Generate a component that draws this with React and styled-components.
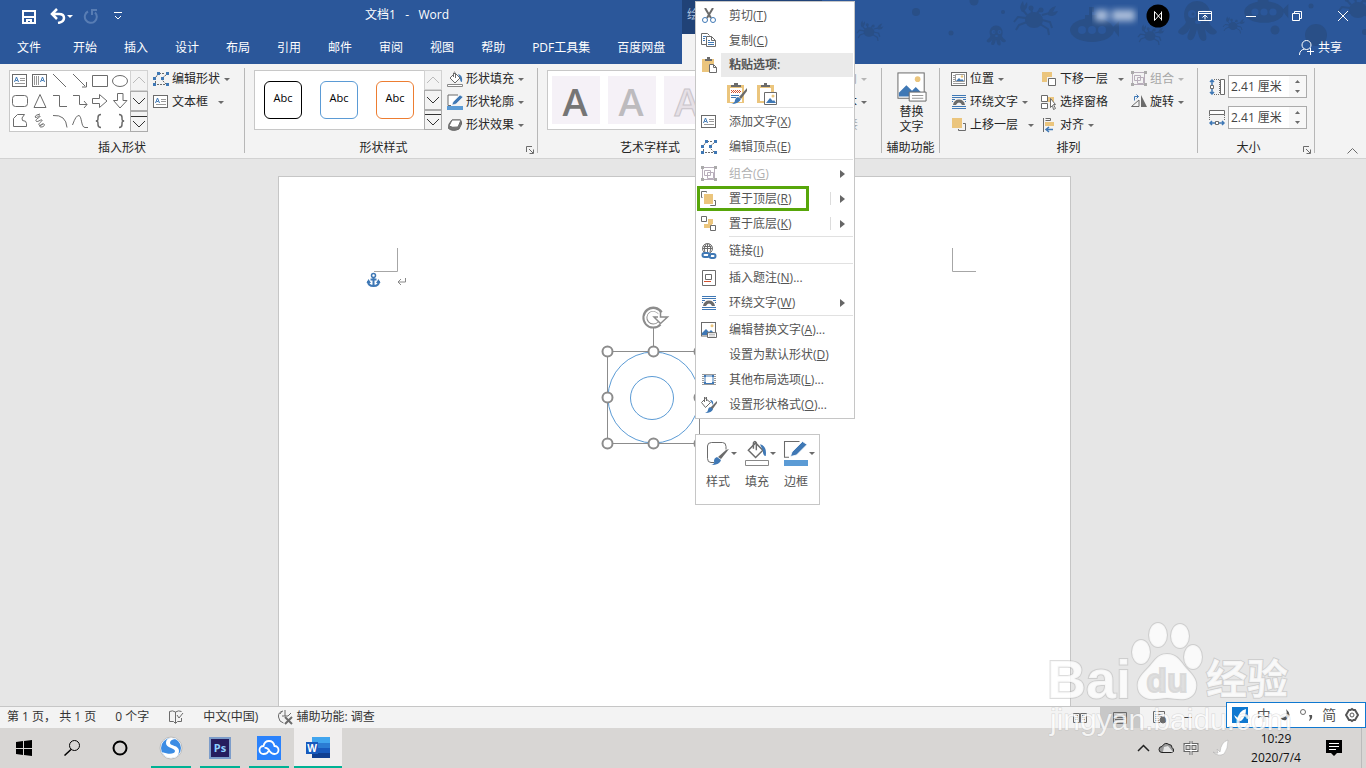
import React, { useState } from "react";
import styled, { createGlobalStyle } from "styled-components";

const GlobalStyle = createGlobalStyle`
    * { box-sizing: border-box; }

    body {
        margin: 0;
        overflow: hidden;
        font-family: "Open Sans", "Noto Sans CJK SC", sans-serif;
        font-size: 12px;
        line-height: 18px;
        color: #262626;
    }

    button, input {
        font: inherit;
        color: inherit;
        border: 0;
        padding: 0;
        background: none;
    }

    svg { display: block; flex: none; }
`;

const blue = "#2b579a";
const grey = "#6b6b6b";
const iconBlue = "#3f78b5";
const gold = "#ebc57d";

const Screen = styled.div`
    position: relative;
    display: flex;
    flex-direction: column;
    height: 100vh;
    overflow: hidden;
`;

/* ---------- header ---------- */

const Header = styled.header`
    position: relative;
    background: ${blue};
    color: #fff;
`;

const Art = styled.svg`
    position: absolute;
    top: 0;
    right: 0;
`;

const TitleRow = styled.div`
    position: relative;
    display: flex;
    height: 34px;
`;

const QuickAccess = styled.div`
    display: flex;
    align-items: center;
    gap: 10px;
    width: 132px;
    padding: 0 0 2px 21px;
`;

const UndoGroup = styled.div`
    display: flex;
    align-items: center;
    margin-left: 3px;
`;

const Title = styled.div`
    width: 550px;
    padding-top: 6px;
    text-align: center;
    white-space: pre;
`;

const ToolTabTitle = styled.div`
    width: 140px;
    padding: 6px 0 0 5px;
    background: #204277;
    color: #a9bfdd;
`;

const WindowButtons = styled.div`
    display: flex;
    align-items: center;
    height: 31px;
    margin-left: auto;
`;

const Account = styled.div`
    display: flex;
    align-items: center;
    gap: 8px;
    margin-right: 12px;
`;

const WindowButton = styled.button`
    display: flex;
    align-items: center;
    justify-content: center;
    width: 46px;
    height: 30px;
`;

const TabRow = styled.nav`
    position: relative;
    display: flex;
    gap: 1px;
    height: 30px;
`;

const Tab = styled.button`
    padding: 0 13px 3px;
    white-space: nowrap;
    ${(props) => props.$file && "width: 59px; padding-left: 17px; text-align: left;"}
    ${(props) => props.$active && "width: 56px; margin-left: 3px; background: #f3f3f3; color: #2b579a;"}
`;

const TellMe = styled.button`
    margin-left: 43px;
    white-space: nowrap;
`;

const Share = styled.button`
    display: flex;
    align-items: center;
    gap: 4px;
    margin: 0 24px 3px auto;
`;

/* ---------- ribbon ---------- */

const Ribbon = styled.div`
    display: flex;
    height: 95px;
    background: #f3f3f3;
    border-bottom: 1px solid #d2d2d2;
`;

const Group = styled.section`
    display: flex;
    flex-direction: column;
    justify-content: space-between;
    flex: none;
    width: ${(props) => props.$width}px;
    padding-top: 3px;
`;

const GroupBody = styled.div`
    display: flex;
    align-items: flex-start;
    gap: ${(props) => props.$gap || 0}px;
    padding-left: ${(props) => props.$left || 0}px;
`;

const GroupFooter = styled.div`
    display: grid;
    grid-template-columns: ${(props) => (props.$launcher ? "1fr 12px" : "1fr")};
    align-items: center;
    height: 20px;
    padding-right: ${(props) => (props.$launcher ? 3 : 0)}px;
    text-align: center;
    white-space: nowrap;
`;

const LauncherButton = styled.button`
    display: flex;
    justify-content: flex-end;
    padding-top: 3px;
`;

const Divider = styled.div`
    width: 1px;
    margin: 4px 0 5px;
    background: #b7b7b7;
`;

const Gallery = styled.div`
    display: flex;
    height: ${(props) => props.$height}px;
    margin-top: 3px;
    background: #fff;
    border: 1px solid #c8c8c8;
`;

const ShapeGrid = styled.div`
    display: grid;
    grid-template-columns: repeat(6, 20px);
    grid-auto-rows: 20px;
`;

const ShapeButton = styled.button`
    display: flex;
    align-items: center;
    justify-content: center;
`;

const Scroller = styled.div`
    display: grid;
    grid-template-rows: repeat(3, 1fr);
    width: 17px;
    margin: -1px;
    margin-left: 0;
`;

const ScrollButton = styled.button`
    display: flex;
    align-items: center;
    justify-content: center;
    background: #f3f3f3;
    border: 1px solid ${(props) => (props.disabled ? "#d2d2d2" : "#ababab")};
`;

const StyleTiles = styled.div`
    display: flex;
    gap: 18px;
    padding: 10px 10px 0 9px;
`;

const StyleTile = styled.button`
    width: 38px;
    height: 38px;
    padding-bottom: 4px;
    border: 1px solid ${(props) => props.$color};
    border-radius: 6px;
    color: #000;
    font-size: 11px;
`;

const ArtTiles = styled.div`
    display: flex;
    gap: 8px;
    padding: 5px 4px;
`;

const ArtTile = styled.button`
    width: 48px;
    height: 48px;
    background: #f5f1f7;
`;

const Column = styled.div`
    display: flex;
    flex-direction: column;
    align-items: ${(props) => (props.$end ? "flex-end" : "flex-start")};
    gap: 1px;
    padding-top: 1px;
    ${(props) => props.$width && `width: ${props.$width}px;`}
    ${(props) => props.$end && "flex: 1; padding-right: 14px;"}
`;

const ToolButton = styled.button`
    display: flex;
    align-items: center;
    gap: 3px;
    height: 22px;
    white-space: nowrap;
    color: ${(props) => (props.disabled ? "#a6a6a6" : "#262626")};
`;

const Caret = styled.span`
    flex: none;
    margin-left: ${(props) => (props.$wide ? 7 : 1)}px;
    border: 3px solid transparent;
    border-top-color: ${(props) => (props.$light ? "#b5b5b5" : props.$white ? "#fff" : "#6b6b6b")};
    border-bottom: 0;
`;

const BigButton = styled.button`
    display: flex;
    flex-direction: column;
    align-items: center;
    gap: 2px;
    width: 100%;
    padding: 5px 0 0 2px;
    line-height: 15px;
`;

const SizeRow = styled.label`
    display: flex;
    align-items: center;
    gap: 3px;
    height: 23px;
`;

const SizeRows = styled.div`
    display: flex;
    flex-direction: column;
    gap: 8px;
    padding-top: 8px;
`;

const SpinBox = styled.span`
    display: flex;
    width: 79px;
    height: 23px;
    background: #fff;
    border: 1px solid #ababab;
`;

const SpinInput = styled.input`
    width: 60px;
    padding-left: 2px;
    color: #444;
    outline: 0;
`;

const SpinButtons = styled.span`
    display: grid;
    grid-template-rows: 1fr 1fr;
    flex: 1;
    background: #f7f7f7;
`;

const SpinButton = styled.button`
    display: flex;
    align-items: center;
    justify-content: center;
`;

const Collapse = styled.div`
    display: flex;
    flex: 1;
    align-items: flex-end;
    justify-content: flex-end;
    padding: 0 8px 4px 0;
`;

/* ---------- document ---------- */

const Canvas = styled.main`
    display: flex;
    flex: 1;
    justify-content: center;
    min-height: 0;
    padding: 17px 17px 0 0;
    background: #e6e6e6;
`;

const Paper = styled.article`
    position: relative;
    width: 793px;
    background: #fff;
    border: 1px solid #c6c6c6;
    border-bottom: 0;
`;

const CanvasItem = styled.svg`
    position: absolute;
    left: ${(props) => props.$x}px;
    top: ${(props) => props.$y}px;
`;

/* ---------- context menu ---------- */

const Menu = styled.div`
    position: absolute;
    left: 695px;
    top: 1px;
    width: 160px;
    padding: 1px;
    background: #fff;
    border: 1px solid #c6c6c6;
    color: #555;
`;

const MenuItem = styled.button`
    display: flex;
    align-items: center;
    position: relative;
    width: 100%;
    height: 25px;
    padding-left: 4px;
    text-align: left;
    white-space: nowrap;
    color: ${(props) => (props.disabled ? "#b1b1b1" : "#555")};
`;

const MenuIcon = styled.span`
    width: 28px;
`;

const MenuLabel = styled.span`
    flex: 1;
`;

const SubArrow = styled.span`
    display: flex;
    align-items: center;
    height: 13px;
    width: 23px;
    padding-left: 9px;
    border-left: 1px solid ${(props) => (props.$split ? "#dcdcdc" : "transparent")};
`;

const MenuLine = styled.div`
    height: 1px;
    margin: 0 0 1px 32px;
    background: #e1e1e1;
`;

const PasteHeader = styled.div`
    display: flex;
    align-items: center;
    height: 24px;
    padding-left: 4px;
    background: linear-gradient(to right, #fff 24px, #eaeaea 24px);
    font-weight: 600;
`;

const PasteOptions = styled.div`
    display: flex;
    gap: 7px;
    height: 30px;
    padding: 2px 0 0 28px;
`;

const Highlight = styled.span`
    position: absolute;
    left: 0;
    top: 0;
    width: 112px;
    height: 25px;
    border: 3px solid #57a60a;
`;

const MiniBar = styled.div`
    position: absolute;
    left: 695px;
    top: 434px;
    display: flex;
    gap: 3px;
    width: 125px;
    height: 71px;
    padding: 5px 0 0 4px;
    background: #fff;
    border: 1px solid #c6c6c6;
    color: #555;
`;

const MiniButton = styled.button`
    display: flex;
    flex-direction: column;
    align-items: center;
    gap: 7px;
    width: 36px;
    height: 52px;
`;

const MiniTop = styled.span`
    display: flex;
    align-items: center;
    margin-left: 5px;
`;

/* ---------- status bar and taskbar ---------- */

const StatusBar = styled.footer`
    display: flex;
    align-items: center;
    gap: 19px;
    height: 22px;
    padding: 0 0 2px 7px;
    background: #f3f3f3;
    border-top: 1px solid #c6c6c6;
    white-space: nowrap;
    color: #333;
`;

const StatusButton = styled.button`
    display: flex;
    align-items: center;
    gap: 3px;
`;

const Views = styled.div`
    display: flex;
    align-items: center;
    height: 21px;
    margin: 0 174px -2px auto;
`;

const ViewButton = styled.button`
    display: flex;
    align-items: center;
    justify-content: center;
    width: 40px;
    height: 21px;
    background: ${(props) => (props.$active ? "#c8c8c8" : "transparent")};
`;

const ImeBar = styled.div`
    position: absolute;
    right: 0;
    bottom: 40px;
    display: flex;
    align-items: center;
    justify-content: space-between;
    width: 140px;
    height: 26px;
    padding: 0 6px 0 5px;
    background: #fff;
    border: 1px solid #0f78d0;
    color: #555;
    font-size: 14px;
`;

const Taskbar = styled.div`
    display: flex;
    height: 40px;
    background: #d8d6d4;
`;

const TaskButton = styled.button`
    display: flex;
    align-items: center;
    justify-content: center;
    width: 48px;
    height: 40px;
`;

const Apps = styled.div`
    display: flex;
    gap: 1px;
    padding-left: 3px;
`;

const AppButton = styled(TaskButton)`
    background: linear-gradient(#00b294, #00b294) center bottom / ${(props) => (props.$active ? 48 : 40)}px 2px no-repeat
        ${(props) => (props.$active ? "#f0eeee" : "transparent")};
`;

const Tray = styled.div`
    display: flex;
    align-items: center;
    gap: 8px;
    margin-left: auto;
    padding-right: 4px;
`;

const Clock = styled.time`
    width: 76px;
    text-align: center;
    line-height: 19px;
    color: #111;
`;

const NoticeButton = styled.button`
    display: flex;
    align-items: center;
    justify-content: center;
    width: 40px;
    height: 40px;
    padding-right: 15px;
    border-right: 1px solid #bbb;
`;

const Watermark = styled.svg`
    position: absolute;
    right: 66px;
    bottom: 24px;
    pointer-events: none;
`;

/* ---------- drawings ---------- */

const Svg = ({ w = 16, h = 16, children }) => (
    <svg width={w} height={h} viewBox={`0 0 ${w} ${h}`} fill="none" stroke={grey} aria-hidden="true">
        {children}
    </svg>
);

const TextBoxIcon = () => (
    <Svg>
        <rect x=".5" y="1.500" width="14" height="12" fill="#fff" />
        <path d="M8 5.500h5M8 7.500h5M3 10.500h10" stroke="#999" />
        <path d="M2.500 9 4.500 4 6.500 9M3.500 7.500h2" stroke={iconBlue} />
    </Svg>
);

const VertTextIcon = () => (
    <Svg>
        <rect x=".5" y="1.500" width="14" height="12" fill="#fff" />
        <path d="M2.500 3v9M4.500 3v9M6.500 3v9" stroke="#999" />
        <path d="M8.500 9 10.500 4 12.500 9M9.500 7.500h2" stroke={iconBlue} />
    </Svg>
);

const EditPointsIcon = () => (
    <Svg>
        <path d="M6 2.500h5M13 4 8 8l5 5M4 13.500h8M2.500 7v5M3 6l2-3" strokeDasharray="2 1" />
        <path d="M4 1h3v3H4zM13 1h3v3h-3zM0 6h3v3H0zM8 6h3v3H8zM0 12h3v3H0zM13 12h3v3h-3z" fill={iconBlue} stroke="none" />
    </Svg>
);

const BucketIcon = ({ line }) => (
    <Svg w={line ? 26 : 16} h={line ? 26 : 16}>
        <g transform={line ? "scale(1.45)" : undefined}>
            <path d="m3 7 5-5 5 5-5 5z" fill="#fff" />
            <path d="M6.500 6V2Q7.500 .2 8.500 2v5" />
            <path d="M11 3q5 1 4 8-2 0-2-4z" fill={iconBlue} stroke="none" />
        </g>
        {line ? <path d="M1.500 20.500h23v5h-23z" fill="#fff" stroke="#888" /> : <path d="M.5 13.500h15v2H.5z" fill="#fff" stroke="#888" />}
    </Svg>
);

const OutlineIcon = ({ line }) => (
    <Svg w={line ? 26 : 16} h={line ? 26 : 16}>
        <g transform={line ? "scale(1.5)" : undefined}>
            <path d="M11 1H1v10.500h3" fill="#fff" strokeWidth={line ? 0.7 : 1} />
            <path d="m5 11 1-3 7-7 3 2-7 7z" fill={iconBlue} stroke="#fff" strokeWidth=".5" />
        </g>
        <path d={line ? "M1 20h24v6H1z" : "M0 12h16v4H0z"} fill="#5b9bd5" stroke="none" />
    </Svg>
);

const EffectIcon = () => (
    <Svg>
        <path d="M1.500 11.500 2 7l3-4h8q2 1 1.500 4L12 12q-6 3-10.500-.5z" fill="#777" stroke="#666" />
        <path d="m2 9 3-6h9l-3 7q-6 1-9-1z" fill="#fff" />
    </Svg>
);

const StyleBrushIcon = () => (
    <Svg w={26} h={26}>
        <path d="M9 22.500H6q-3.500 0-3.500-4V6q0-3.500 4-3.500h11q3.500 0 3.500 4v3" />
        <path d="m24 9-8 10-3-2 8-7z" fill={grey} stroke="none" />
        <path d="m12 17 4 3q-1 5-10 5 4-1 3-4 0-3 3-4z" fill={iconBlue} stroke="none" />
    </Svg>
);

const PictureIcon = ({ size = 16 }) => (
    <svg width={size} height={size} viewBox="0 0 16 16" fill="none" aria-hidden="true">
        <rect x=".5" y=".5" width="14" height="13.500" fill="#fff" stroke={grey} strokeWidth={16 / size} />
        <circle cx="11" cy="3.800" r="1.500" fill={gold} />
        <path d="M1 13v-2l4-4 3 3 2-2 4 4v1z" fill={iconBlue} />
        <path d="M6.500 10.700H15.500V15.500H6.500z" fill="#fff" stroke={grey} strokeWidth={16 / size} />
        <path d="M8 12.500h6M8 14h6" stroke="#999" strokeWidth=".6" />
    </svg>
);

const LayoutIcon = () => (
    <Svg>
        <rect x=".5" y="1.500" width="15" height="13" fill="#fff" />
        <path d="M2 4.500h2M2 6.500h2M2 8.500h2M2 10.500h2M2 12.500h12" stroke="#999" />
        <path d="M4.500 3.500h9v7h-9z" stroke="#999" />
        <path d="m5 10 3-3 2 2 1-1 2 2z" fill={iconBlue} stroke="none" />
        <circle cx="11" cy="5.500" r="1.200" fill={gold} stroke="none" />
    </Svg>
);

const WrapIcon = () => (
    <Svg>
        <path d="M1 1.500h14M1 3.500h14M1 5.500h3M12 5.500h3M1 7.500h1M14 7.500h1M1 12.500h14M1 14.500h14" stroke={iconBlue} />
        <path d="M2 11q1-5.500 6-5.500t6 5.500h-3q-1-2.500-3-2.500T5 11z" fill={grey} stroke="none" />
    </Svg>
);

const ForwardIcon = () => (
    <Svg>
        <path d="M1 1h10v10H1z" fill={gold} stroke="none" />
        <path d="M12 6.500h2.500v7h-7V12" stroke={grey} />
    </Svg>
);

const BackwardIcon = () => (
    <Svg>
        <path d="M1 1h10v5H6v5H1z" fill={gold} stroke="none" />
        <path d="M7.500 7.500h7v7h-7z" fill="#fff" />
    </Svg>
);

const BringFrontIcon = () => (
    <Svg>
        <path d="M3 3h9v10H3z" fill={gold} stroke="none" />
        <path d="M1.500 6.500h-1v-6h5v1M13 9.500h1.500v5h-5V14" />
    </Svg>
);

const SendBackIcon = () => (
    <Svg>
        <path d="M7 3h5v5h-1v4H3V8h4z" fill={gold} stroke="none" />
        <path d="M.5.5h5v5h-5zM9.500 9.500h5v5h-5z" fill="#fff" />
    </Svg>
);

const SelectPaneIcon = () => (
    <Svg>
        <path d="M.5 1.500h6v6h-6zM.5 9.500h6v5h-6z" fill="#fff" />
        <path d="M7 3h6v5H7z" fill={gold} stroke="none" />
        <path d="m9.500 4.500 5 6h-2l2 4-2 1-1-4-2 2z" fill="#fff" />
    </Svg>
);

const AlignIcon = () => (
    <Svg>
        <path d="M2.500 1v14M4.500 1.500h5v2h-5" />
        <path d="M4 5h9v4H4z" fill={gold} stroke="none" />
        <path d="M12 12.500H5M8 10l-3 2.500L8 15" stroke={iconBlue} strokeWidth="1.500" />
    </Svg>
);

const GroupIcon = () => (
    <Svg>
        <path d="M1.500 1.500h12v12h-12zM3.500 4.500h6v5h-6zM6.500 6.500h6v6h-6z" stroke="#b8aebb" />
        <path d="M0 0h3v3H0zM13 0h3v3h-3zM0 12h3v3H0zM13 12h3v3h-3z" fill="#aaa" stroke="none" />
    </Svg>
);

const RotateIcon = () => (
    <Svg>
        <path d="M.5 12.500H8V6z" />
        <path d="M10 1v12h6z" fill={grey} stroke="none" />
        <path d="M3.500 6.500v-4h4M5.500.5l2 2-2 2" stroke={iconBlue} />
    </Svg>
);

const HeightIcon = () => (
    <Svg>
        <path d="M5 .5h5M5 15.500h5M10.500 1v14" strokeDasharray="1 1" />
        <path d="M11.500.5h4v15h-4zM1.500 6.500h3v3h-3z" fill="#fff" />
        <path d="M3 6V1M1 3l2-2 2 2M3 10v5M1 13l2 2 2-2" stroke={iconBlue} strokeWidth="1.500" />
    </Svg>
);

const WidthIcon = () => (
    <Svg>
        <path d="M.5.5h15v4H.5z" fill="#fff" />
        <path d="M.5 5v6M15.500 5v6" strokeDasharray="1 1" />
        <path d="M6.500 11.500h3v3h-3z" fill="#fff" />
        <path d="M6 13H1M3 11l-2 2 2 2M10 13h5M13 11l2 2-2 2" stroke={iconBlue} strokeWidth="1.500" />
    </Svg>
);

const CutIcon = () => (
    <Svg>
        <path d="m4 0 6 10M12 0 6 10" strokeWidth="2" />
        <circle cx="4" cy="12" r="2.500" stroke={iconBlue} />
        <circle cx="12" cy="12" r="2.500" stroke={iconBlue} />
    </Svg>
);

const CopyIcon = () => (
    <Svg>
        <path d="M5 11.500H.5V.5h6l2 2" />
        <path d="M5.500 3.500h5l4 4v6h-9zM10.500 3.500v4h4" fill="#fff" />
        <path d="M2 3.500h3M2 5.500h2M2 7.500h2M7 7.500h2M7 9.500h6M7 11.500h6" stroke={iconBlue} />
    </Svg>
);

const PasteIcon = () => (
    <Svg>
        <path d="M1 2h12v5H8v8H1z" fill={gold} stroke="none" />
        <path d="M4 4V2h2V0h3v2h2v2z" fill={grey} stroke="none" />
        <path d="M8.500 7.500h4l3 3v5h-7zM12.500 7.500v3h3" fill="#fff" />
    </Svg>
);

const PasteFormatIcon = () => (
    <Svg w={23} h={23}>
        <path d="M2 3h17v18H2z" fill={gold} stroke="none" />
        <path d="M5 6h12v14H5z" fill="#fff" stroke="none" />
        <path d="M6 5V3h3V1h4v2h3v2z" fill={grey} stroke="none" />
        <path d="M6 8.500h10M7 9.500h9M6 10.500h10" stroke="#d4512e" strokeDasharray="1 1" />
        <path d="M6 13.500h8M6 15.500h5" stroke={iconBlue} />
        <path d="m22 6-8 9 2 2 6-8z" fill={grey} stroke="none" />
        <path d="m13 15 3 2q-2 5-10 5 4-1 4-4 1-3 3-3z" fill={iconBlue} stroke="none" />
    </Svg>
);

const PastePictureIcon = () => (
    <Svg w={23} h={23}>
        <path d="M2 3h17v7H9v11H2z" fill={gold} stroke="none" />
        <path d="M5 6h11v4H9v9H5z" fill="#fff" stroke="none" />
        <path d="M6 5V3h3V1h3v2h3v2z" fill={grey} stroke="none" />
        <path d="M9.500 10.500h12v12h-12z" fill="#fff" />
        <path d="m11 21 4-5 3 3 1-1 2 3z" fill={iconBlue} stroke="none" />
        <circle cx="18" cy="14" r="1.500" fill={gold} stroke="none" />
    </Svg>
);

const LinkIcon = () => (
    <Svg>
        <circle cx="6.500" cy="5.500" r="5" />
        <path d="M1.500 5.500h10M6.500.5v9M2.500 3.500h8M4 10Q2 5 5 1M9 9q2-4-1-8" />
        <path d="M3.500 10h3a2 2 0 0 1 0 4h-3a2 2 0 0 1 0-4zM10.500 11h2a2 2 0 0 1 0 4h-2a2 2 0 0 1 0-4z" stroke={iconBlue} strokeWidth="2" fill="#fff" />
        <path d="M7 12.500h3" stroke={iconBlue} strokeWidth="2" />
    </Svg>
);

const CaptionIcon = () => (
    <Svg>
        <path d="M1.500.5h13v15h-13z" />
        <path d="M4.500 4.500h6v5h-6z" />
        <path d="M3 11.500h7" stroke="#d4512e" />
    </Svg>
);

const MoreLayoutIcon = () => (
    <Svg>
        <path d="M1 2.500h14M1 4.500h2M13 4.500h2M1 6.500h2M13 6.500h2M1 8.500h2M13 8.500h2M1 10.500h2M13 10.500h2M1 12.500h14" stroke="#999" />
        <path d="M4 4h8v7.500H4z" fill="#fff" stroke={iconBlue} />
        <path d="M3 3h2v2H3zM11 3h2v2h-2zM3 10h2v2H3zM11 10h2v2h-2z" fill={iconBlue} stroke="none" />
    </Svg>
);

const FormatIcon = () => (
    <Svg>
        <path d="m.5 5.500 4-4 5 4-5 5zM3.500 5V0h2v4" />
        <path d="m16 4-7 7 2 2 5-7z" fill={grey} stroke="none" />
        <path d="m9 10 3 2q-1 4-8 4 3-1 3-3t2-3z" fill={iconBlue} stroke="none" />
        <path d="M9 3q4 0 3 5z" fill={iconBlue} stroke="none" />
    </Svg>
);

const LauncherIcon = () => (
    <Svg w={8} h={8}>
        <path d="M.5 6V.5H6M3 3l4 4M7.500 3.500v4h-4" />
    </Svg>
);

const shapes = [
    <TextBoxIcon />,
    <VertTextIcon />,
    <Svg><path d="m1 1 13 13" /></Svg>,
    <Svg><path d="m1 1 12 12M14.500 9v5H10" /></Svg>,
    <Svg><path d="M.5 2.500h15v11H.5z" /></Svg>,
    <Svg><ellipse cx="8" cy="8" rx="7.500" ry="5.500" /></Svg>,
    <Svg><rect x=".5" y="2.500" width="15" height="11" rx="3" /></Svg>,
    <Svg><path d="M8 1.500 14 14.500H2z" /></Svg>,
    <Svg><path d="M1 2.500h6.500v11H15" /></Svg>,
    <Svg><path d="M1 2.500h6.500v9H15M12 8l3 3.500-3 3.500" /></Svg>,
    <Svg><path d="M.5 5.500h7v-4L15 8l-7.500 6.500v-4h-7z" /></Svg>,
    <Svg><path d="M5.500.5v7h-4L8 15l7-7.500h-4v-7z" /></Svg>,
    <Svg><path d="M1.500 13.500v-8l4-4h7q-4 4-2 6 4 0 4 3v3z" /></Svg>,
    <Svg><path d="M8 1Q3 2 3 4c1 2 4-2 5-1S3 6 4 8s5-2 6-1-4 3-3 5 4-2 5-1 0 3-3 3 0-3 2-3" /></Svg>,
    <Svg><path d="M1 2.500q13-1 14 12" /></Svg>,
    <Svg><path d="M.5 12Q4 2 7 2.500c3 1 2 12 6 12h3" /></Svg>,
    <Svg><path d="M9 1.500q-3 0-3 3c0 3 0 3-2 3.500 2 .5 2 .5 2 3.500q0 3 3 3" strokeWidth="1.500" /></Svg>,
    <Svg><path d="M7 1.500q3 0 3 3c0 3 0 3 2 3.500-2 .5-2 .5-2 3.500q0 3-3 3" strokeWidth="1.500" /></Svg>,
];

const HeaderArt = () => (
    <Art width="516" height="64" viewBox="850 0 516 64" fill="#294f87" aria-hidden="true">
        <defs>
            <g id="crab">
                <ellipse cx="0" cy="0" rx="9" ry="8" />
                <path d="M-8-2-16-3-20 2M-7 2-15 5-18 10M8 0l8 2 2 6M6 4l8 5 1 6M-7-5l-5-6M8-5l8-2M-2-7l-1-6M3-7l4-4" fill="none" stroke="#294f87" strokeWidth="2" />
                <path d="M-12-8q-4-5 1-11l1 5 3-4q2 7-5 10zM14-5q0-7 8-9l-3 6 5-1q-3 7-10 4z" />
                <circle cx="-3" cy="-12" r="2.500" />
                <circle cx="7" cy="-10" r="2.500" />
            </g>
            <g id="octo">
                <path d="M0-15c11 0 16 11 12 21 2 6 7 7 8 10-3 5-9 2-12-3 1 7 3 11-1 12-5 0-5-6-7-12-2 7-3 12-8 11-4-3 1-8 1-12-3 7-9 9-12 4 2-5 6-5 8-10C-16-4-10-15 0-15z" />
                <g fill="#2b579a">
                    <circle cx="-5" cy="-2" r="4" />
                    <circle cx="7" cy="-2" r="4" />
                    <ellipse cx="1" cy="6" rx="3" ry="2" />
                </g>
                <circle cx="-4" cy="-2" r="1.500" />
                <circle cx="7" cy="-2" r="1.500" />
            </g>
            <g id="sub">
                <ellipse cx="0" cy="0" rx="22" ry="12" />
                <path d="M-7-10v-5h12v5M-3-15v-8h5v5h-2v4M20-2l7-7v16z" />
                <g fill="#2b579a">
                    <circle cx="-10" cy="0" r="4" />
                    <circle cx="0" cy="0" r="4" />
                    <circle cx="10" cy="0" r="4" />
                </g>
            </g>
        </defs>
        <use href="#crab" transform="translate(869 32) scale(.6)" />
        <use href="#crab" transform="translate(1034 20)" />
        <use href="#octo" transform="translate(996 33) scale(.5)" />
        <use href="#sub" transform="translate(1092 30)" />
        <use href="#crab" transform="translate(1150 36) scale(.6)" />
        <use href="#octo" transform="translate(1197 16)" />
        <use href="#crab" transform="translate(1233 26) scale(.5)" />
        <use href="#sub" transform="translate(1264 12) scale(.9)" />
        <use href="#crab" transform="translate(1358 10)" />
        <circle cx="916" cy="12" r="4" />
        <circle cx="974" cy="1" r="4.500" />
        <circle cx="951" cy="33" r="2.500" />
        <circle cx="1003" cy="12" r="2" />
        <circle cx="1275" cy="30" r="4.500" />
        <circle cx="1316" cy="35" r="11" />
        <circle cx="1311" cy="6" r="2.500" />
        <circle cx="1365" cy="32" r="3" />
    </Art>
);

const tabs = ["开始", "插入", "设计", "布局", "引用", "邮件", "审阅", "视图", "帮助", "PDF工具集", "百度网盘"];

const menuItems = [
    { text: "添加文字", accel: "X", icon: <TextBoxIcon /> },
    { text: "编辑顶点", accel: "E", icon: <EditPointsIcon />, line: true },
    { text: "组合", accel: "G", icon: <GroupIcon />, sub: true, disabled: true },
    { text: "置于顶层", accel: "R", icon: <BringFrontIcon />, sub: true, split: true, marked: true },
    { text: "置于底层", accel: "K", icon: <SendBackIcon />, sub: true, split: true, line: true },
    { text: "链接", accel: "I", icon: <LinkIcon />, line: true },
    { text: "插入题注", accel: "N", icon: <CaptionIcon />, more: true },
    { text: "环绕文字", accel: "W", icon: <WrapIcon />, sub: true, line: true },
    { text: "编辑替换文字", accel: "A", icon: <PictureIcon />, more: true },
    { text: "设置为默认形状", accel: "D" },
    { text: "其他布局选项", accel: "L", icon: <MoreLayoutIcon />, more: true },
    { text: "设置形状格式", accel: "O", icon: <FormatIcon />, more: true },
];

const Item = ({ item }) => (
    <>
        <MenuItem disabled={item.disabled}>
            <MenuIcon>{item.icon}</MenuIcon>
            <MenuLabel>
                {item.text}(<u>{item.accel}</u>){item.more && "..."}
            </MenuLabel>
            {item.sub && (
                <SubArrow $split={item.split}>
                    <svg width="5" height="8"><path d="M0 0l5 4-5 4z" fill="#666" /></svg>
                </SubArrow>
            )}
            {item.marked && <Highlight />}
        </MenuItem>
        {item.line && <MenuLine />}
    </>
);

const Tool = ({ icon, text, caret, wide, disabled }) => (
    <ToolButton disabled={disabled}>
        {icon}
        {text}
        {caret && <Caret $wide={wide} $light={disabled} />}
    </ToolButton>
);

const GalleryScroll = () => (
    <Scroller>
        <ScrollButton disabled aria-label="上一行"><Svg w={14} h={8}><path d="m1 7 6-6 6 6" stroke="#bbb" /></Svg></ScrollButton>
        <ScrollButton aria-label="下一行"><Svg w={14} h={8}><path d="m1 1 6 6 6-6" stroke="#333" /></Svg></ScrollButton>
        <ScrollButton aria-label="其他"><Svg w={16} h={14}><path d="M0 1.500h16M2 6l6 6 6-6" stroke="#333" /></Svg></ScrollButton>
    </Scroller>
);

const Footer = ({ text, launcher }) => (
    <GroupFooter $launcher={launcher}>
        <span>{text}</span>
        {launcher && <LauncherButton aria-label={text + "设置"}><LauncherIcon /></LauncherButton>}
    </GroupFooter>
);

const artStyles = [
    { fill: "#757575", stroke: "none" },
    { fill: "#bdbbbe", stroke: "none" },
    { fill: "#e6e0e6", stroke: "#c9c4ca" },
];

const SizeField = ({ icon, label }) => {
    const [value, setValue] = useState("2.41 厘米");

    return (
        <SizeRow>
            {icon}
            <SpinBox>
                <SpinInput aria-label={label} value={value} onChange={(e) => setValue(e.target.value)} />
                <SpinButtons>
                    <SpinButton aria-label="增加"><svg width="5" height="3"><path d="M0 3h5L2.500 0z" fill={grey} /></svg></SpinButton>
                    <SpinButton aria-label="减少"><svg width="5" height="3"><path d="M0 0h5L2.500 3z" fill={grey} /></svg></SpinButton>
                </SpinButtons>
            </SpinBox>
        </SizeRow>
    );
};

const handles = [[17, 51], [63, 51], [109, 51], [17, 97], [109, 97], [17, 143], [63, 143], [109, 143]];

const App = () => {
    return (
        <Screen>
            <GlobalStyle />
            <Header>
                <HeaderArt />
                <TitleRow>
                    <QuickAccess>
                        <button aria-label="保存">
                            <Svg><path d="M2 3h12v12H2z" stroke="#fff" strokeWidth="2" /><path d="M2 9h12M6 12h4v3H6z" stroke="#fff" strokeWidth="2" /></Svg>
                        </button>
                        <UndoGroup>
                            <button aria-label="撤消">
                                <Svg><path d="M2 6h7q5 0 5 4t-6 5M7 1 2 6l5 5" stroke="#fff" strokeWidth="2.500" /></Svg>
                            </button>
                            <Caret as="button" $white aria-label="撤消列表" />
                        </UndoGroup>
                        <button aria-label="重复">
                            <Svg><path d="M5 3.500a6 6 0 1 0 7 1M14 2H9v5" stroke="#587db4" strokeWidth="2" /></Svg>
                        </button>
                        <button aria-label="自定义快速访问工具栏">
                            <Svg w={20} h={10}><path d="M5 1.500h8M6 5l3 3 3-3" stroke="#fff" /></Svg>
                        </button>
                    </QuickAccess>
                    <Title>{"文档1   -   Word"}</Title>
                    <ToolTabTitle>绘图工具</ToolTabTitle>
                    <WindowButtons>
                        <Account>
                            <svg width="46" height="24">
                                <g fill="#a9bcd9" filter="blur(3px)"><rect x="3" y="6" width="13" height="11" /><rect x="20" y="6" width="23" height="11" /></g>
                            </svg>
                            <svg width="24" height="24" viewBox="0 0 24 24" fill="none" stroke="#fff">
                                <circle cx="12" cy="12" r="11.500" fill="#000" stroke="none" />
                                <path d="M8.500 16.500v-9l7 8v-8M8.500 16.500l7-8v8" />
                            </svg>
                        </Account>
                        <WindowButton aria-label="功能区显示选项"><Svg w={14} h={12}><path d="M.5 1.500h13v9H.5zM1 3.500h12M7 9.500V5M4.500 7.500 7 5l2.500 2.500" stroke="#fff" /></Svg></WindowButton>
                        <WindowButton aria-label="最小化"><Svg w={10} h={10}><path d="M0 5.500h10" stroke="#fff" /></Svg></WindowButton>
                        <WindowButton aria-label="还原"><Svg w={10} h={10}><path d="M.5 2.500h7v7h-7zM2.500 2V.5h7v7H8" stroke="#fff" /></Svg></WindowButton>
                        <WindowButton aria-label="关闭"><Svg w={10} h={10}><path d="m0 0 10 10M10 0 0 10" stroke="#fff" /></Svg></WindowButton>
                    </WindowButtons>
                </TitleRow>
                <TabRow>
                    <Tab $file>文件</Tab>
                    {tabs.map((tab) => <Tab key={tab}>{tab}</Tab>)}
                    <Tab $active>格式</Tab>
                    <TellMe>操作说明搜索</TellMe>
                    <Share>
                        <Svg w={15} h={17}><circle cx="7.500" cy="6" r="4.500" stroke="#fff" /><path d="M.5 16q0-5 5-6M8 12.500h7M11.500 9v7" stroke="#fff" /></Svg>
                        共享
                    </Share>
                </TabRow>
            </Header>

            <Ribbon>
                <Group $width={244}>
                    <GroupBody $left={9} $gap={6}>
                        <Gallery $height={62}>
                            <ShapeGrid>
                                {shapes.map((shape, i) => <ShapeButton key={i} aria-label={"形状" + (i + 1)}>{shape}</ShapeButton>)}
                            </ShapeGrid>
                            <GalleryScroll />
                        </Gallery>
                        <Column>
                            <Tool icon={<EditPointsIcon />} text="编辑形状" caret />
                            <Tool icon={<TextBoxIcon />} text="文本框" caret wide />
                        </Column>
                    </GroupBody>
                    <Footer text="插入形状" />
                </Group>
                <Divider />
                <Group $width={292}>
                    <GroupBody $left={9} $gap={6}>
                        <Gallery $height={60}>
                            <StyleTiles>
                                <StyleTile $color="#000">Abc</StyleTile>
                                <StyleTile $color="#5b9bd5">Abc</StyleTile>
                                <StyleTile $color="#ed7d31">Abc</StyleTile>
                            </StyleTiles>
                            <GalleryScroll />
                        </Gallery>
                        <Column>
                            <Tool icon={<BucketIcon />} text="形状填充" caret />
                            <Tool icon={<OutlineIcon />} text="形状轮廓" caret />
                            <Tool icon={<EffectIcon />} text="形状效果" caret />
                        </Column>
                    </GroupBody>
                    <Footer text="形状样式" launcher />
                </Group>
                <Divider />
                <Group $width={224}>
                    <GroupBody $left={9}>
                        <Gallery $height={60}>
                            <ArtTiles>
                                {artStyles.map((style, i) => (
                                    <ArtTile key={i} aria-label={"艺术字" + (i + 1)}>
                                        <svg width="48" height="48" overflow="visible">
                                            <text x="23" y="40" textAnchor="middle" fontSize="38" fontFamily="Open Sans, sans-serif" fontWeight="600" {...style}>A</text>
                                        </svg>
                                    </ArtTile>
                                ))}
                            </ArtTiles>
                        </Gallery>
                    </GroupBody>
                    <Footer text="艺术字样式" />
                </Group>
                <Divider />
                <Group $width={118}>
                    <GroupBody>
                        <Column $end>
                            <Tool text="文字方向" caret disabled />
                            <Tool text="对齐文本" caret />
                            <ToolButton disabled>创建链接&nbsp;&nbsp;&nbsp;</ToolButton>
                        </Column>
                    </GroupBody>
                    <Footer text="文本" />
                </Group>
                <Divider />
                <Group $width={57}>
                    <BigButton>
                        <PictureIcon size={30} />
                        <span>替换<br />文字</span>
                    </BigButton>
                    <Footer text="辅助功能" />
                </Group>
                <Divider />
                <Group $width={257}>
                    <GroupBody $left={11}>
                        <Column $width={90}>
                            <Tool icon={<LayoutIcon />} text="位置" caret />
                            <Tool icon={<WrapIcon />} text="环绕文字" caret />
                            <Tool icon={<ForwardIcon />} text="上移一层" caret wide />
                        </Column>
                        <Column $width={90}>
                            <Tool icon={<BackwardIcon />} text="下移一层" caret wide />
                            <Tool icon={<SelectPaneIcon />} text="选择窗格" />
                            <Tool icon={<AlignIcon />} text="对齐" caret />
                        </Column>
                        <Column>
                            <Tool icon={<GroupIcon />} text="组合" caret disabled />
                            <Tool icon={<RotateIcon />} text="旋转" caret />
                        </Column>
                    </GroupBody>
                    <Footer text="排列" />
                </Group>
                <Divider />
                <Group $width={116}>
                    <GroupBody $left={11}>
                        <SizeRows>
                            <SizeField icon={<HeightIcon />} label="高度" />
                            <SizeField icon={<WidthIcon />} label="宽度" />
                        </SizeRows>
                    </GroupBody>
                    <Footer text="大小" launcher />
                </Group>
                <Divider />
                <Collapse>
                    <button aria-label="折叠功能区"><Svg w={11} h={6}><path d="m.5 5.500 5-5 5 5" /></Svg></button>
                </Collapse>
            </Ribbon>

            <Canvas>
                <Paper>
                    <CanvasItem $x={86} $y={70} width="46" height="48" fill="none">
                        <path d="M9 24.500h23.500V1" stroke="#a6a6a6" />
                        <circle cx="8.500" cy="28.500" r="2" stroke={iconBlue} strokeWidth="1.500" />
                        <path d="M8.500 30v8M5.500 32.500h6M3 34q0 5 5.500 5T14 34" stroke={iconBlue} strokeWidth="2" />
                        <path d="m1.500 36 2-4 2.500 4zM11 36l2.500-4 2 4z" fill={iconBlue} />
                        <path d="M40.500 31v4H33M36 32l-3 3 3 3" stroke="#888" />
                    </CanvasItem>
                    <CanvasItem $x={672} $y={70} width="26" height="26" fill="none">
                        <path d="M1.500 1v23.500H25" stroke="#a6a6a6" />
                    </CanvasItem>
                    <CanvasItem $x={311} $y={123} width="120" height="152" fill="none">
                        <path d="M17.500 51.500h92v92h-92zM63.500 28v23" stroke="#8c8c8c" />
                        <circle cx="63.500" cy="97.500" r="45.500" stroke="#5b9bd5" />
                        <circle cx="62" cy="98" r="21.500" stroke="#5b9bd5" />
                        {handles.map(([x, y]) => (
                            <circle key={x + "-" + y} cx={x + 0.5} cy={y + 0.5} r="5" fill="#fff" stroke="#8c8c8c" strokeWidth="2" />
                        ))}
                        <path d="M69.500 23.500A8.500 8.500 0 1 1 70.500 13" stroke="#8c8c8c" strokeWidth="5" />
                        <path d="M69 23A7.800 7.800 0 1 1 70 14" stroke="#fff" strokeWidth="2" />
                        <path d="M70.500 10.500v6.500h7l-7 6.500-6.500-6.500h4" fill="#fff" stroke="#8c8c8c" strokeWidth="1.500" />
                    </CanvasItem>
                </Paper>
            </Canvas>

            <StatusBar>
                <StatusButton>第 1 页， 共 1 页</StatusButton>
                <StatusButton>0 个字</StatusButton>
                <StatusButton aria-label="校对">
                    <Svg><path d="M7.500 3v11M7.500 3q-3-2-6-.5v10h4l2 2 2-2h4V9M7.500 3q3-2 6-.5M9 6l2 3 4-5" /></Svg>
                </StatusButton>
                <StatusButton>中文(中国)</StatusButton>
                <StatusButton>
                    <Svg><path d="M6 2Q1 3 1.500 8q.5 5 5 6M3 5l2-3M8 1v6M5 7h6l3-3" /><path d="m8 8 7 7M15 8l-7 7" strokeWidth="2" /></Svg>
                    辅助功能: 调查
                </StatusButton>
                <Views>
                    <ViewButton aria-label="阅读视图"><Svg w={14} h={12}><path d="M.5 1.500h6v9h-6zM7.500 1.500h6v9h-6zM2 3.500h3M2 5.500h3M2 7.500h3M9 3.500h3M9 5.500h3M9 7.500h3" /></Svg></ViewButton>
                    <ViewButton $active aria-label="页面视图"><Svg w={14} h={12}><path d="M.5.5h13v11H.5zM2 3.500h10M2 5.500h10M2 7.500h10" /></Svg></ViewButton>
                    <ViewButton aria-label="Web 版式视图"><Svg w={14} h={13}><path d="M7 11.500H.5V.5h11V6M2 3.500h8M2 5.500h7M2 7.500h4M2 9.500h4" /><circle cx="10" cy="9" r="3" fill={grey} /></Svg></ViewButton>
                    <button aria-label="缩小"><Svg w={12} h={9}><path d="M4 4.500h8" stroke="#444" /></Svg></button>
                </Views>
            </StatusBar>

            <Taskbar>
                <TaskButton aria-label="开始"><Svg><path d="m0 2 7-1v7H0zM8 1l8-1v8H8zM0 9h7v6l-7-1zM8 9h8v7l-8-1z" fill="#000" stroke="none" /></Svg></TaskButton>
                <TaskButton aria-label="搜索"><Svg><circle cx="10.500" cy="5.500" r="5" stroke="#000" /><path d="M7 9.500.5 15.500" stroke="#000" strokeWidth="1.500" /></Svg></TaskButton>
                <TaskButton aria-label="Cortana"><Svg><circle cx="8" cy="8" r="6.500" stroke="#000" strokeWidth="2" /></Svg></TaskButton>
                <Apps>
                    <AppButton aria-label="搜狗浏览器">
                        <Svg w={24} h={24}>
                            <circle cx="12" cy="12" r="11" fill="#fff" stroke="#bbb" />
                            <circle cx="12" cy="12" r="10" fill="#3b8ce4" stroke="none" />
                            <path d="M18 3Q7 0 7 7c0 5 9 5 9 8s-6 4-13 1q3 6 9 6 8 0 8-7c0-6-9-5-9-8q0-4 7-4z" fill="#fff" stroke="none" />
                        </Svg>
                    </AppButton>
                    <AppButton aria-label="Photoshop">
                        <svg width="22" height="22">
                            <rect x="1" y="1" width="20" height="20" fill="#261d5e" stroke="#7d9dca" strokeWidth="2" />
                            <text x="11" y="15" textAnchor="middle" fontSize="11" fontWeight="700" fontFamily="Open Sans, sans-serif" fill="#8fd0ff">Ps</text>
                        </svg>
                    </AppButton>
                    <AppButton aria-label="百度网盘">
                        <Svg w={24} h={24}>
                            <path d="M0 0h24v24H0z" fill="#2a82fc" stroke="none" />
                            <path d="M6.500 18a4 4 0 0 1 0-8q1-5 5.500-5t5.500 5a4 4 0 0 1 0 8q-3 0-5-3-2-4-5-3M6.500 18q4 0 5-3" stroke="#fff" strokeWidth="1.800" />
                        </Svg>
                    </AppButton>
                    <AppButton $active aria-label="Word">
                        <svg width="24" height="24">
                            <path d="M6 1h18v6H6z" fill="#41a5ee" />
                            <path d="M6 7h18v5H6z" fill="#2b7cd3" />
                            <path d="M6 12h18v5H6z" fill="#185abd" />
                            <path d="M6 17h18v5H6z" fill="#103f91" />
                            <path d="M0 6h12v12H0z" fill="#185abd" />
                            <text x="6" y="16" textAnchor="middle" fontSize="10" fontWeight="700" fontFamily="Open Sans, sans-serif" fill="#fff">W</text>
                        </svg>
                    </AppButton>
                </Apps>
                <Tray>
                    <button aria-label="显示隐藏的图标"><Svg w={13} h={8}><path d="m1 7 5.500-5.500L12 7" stroke="#222" strokeWidth="1.500" /></Svg></button>
                    <Svg w={17} h={14}><path d="M4 11.500a3 3 0 0 1 0-6q3-5 7-2 3 0 3 3 2 1 1.500 4l-2 1z" fill="#999" stroke="#222" /><path d="m6 6 4-1 5 6H5z" fill="#e4e4e4" stroke="none" /></Svg>
                    <Svg><path d="M2 4.500h12v6H2zM8 1v14" stroke="#666" strokeWidth="3" /><path d="M2 4.500h12v6H2zM8 1v14" stroke="#fff" /></Svg>
                    <Svg w={23} h={18}><path d="m10 10 3 3q1-10 8-12 0 9-4 14-6 3-11-2 3 2 5 1z" fill="#fff" stroke="#aaa" strokeWidth=".5" /></Svg>
                    <Clock>10:29<br />2020/7/4</Clock>
                    <NoticeButton aria-label="通知"><Svg><path d="M0 0h16v13h-5l-3 3-3-3H0z" fill="#000" stroke="none" /><path d="M3 3.500h10M3 6.500h10M3 9.500h7" stroke="#fff" /></Svg></NoticeButton>
                </Tray>
            </Taskbar>

            <ImeBar>
                <Svg><path d="M0 0h16v16H0z" fill="#0f78d0" stroke="none" /><path d="m2 8 4 3q1-7 8-9 0 8-5 12-5 0-7-6z" fill="#fff" stroke="none" /></Svg>
                <span>中</span>
                <Svg w={12}><path d="M6 2q7 6 0 11-3 1-6-2 9 0 6-9z" fill="#555" stroke="none" /></Svg>
                <Svg w={13}><circle cx="3" cy="5" r="2.500" /><path d="M9 8h3q1 4-3 6l1-3z" fill="#555" stroke="none" /></Svg>
                <span>简</span>
                <Svg w={14}><path d="m4 3 1.500 0L7 2l1.500 1H10l3 5-3 5H8.500L7 14l-1.500-1H4L1 8z" stroke="#555" strokeWidth="2" /><circle cx="7" cy="8" r="2" stroke="#555" /></Svg>
            </ImeBar>

            <Menu>
                <Item item={{ text: "剪切", accel: "T", icon: <CutIcon /> }} />
                <Item item={{ text: "复制", accel: "C", icon: <CopyIcon /> }} />
                <PasteHeader><MenuIcon><PasteIcon /></MenuIcon>粘贴选项:</PasteHeader>
                <PasteOptions>
                    <button aria-label="保留源格式"><PasteFormatIcon /></button>
                    <button aria-label="图片"><PastePictureIcon /></button>
                </PasteOptions>
                <MenuLine />
                {menuItems.map((item) => <Item key={item.text} item={item} />)}
            </Menu>

            <MiniBar>
                <MiniButton><MiniTop><StyleBrushIcon /><svg width="6" height="3"><path d="M0 0h6L3 3z" fill={grey} /></svg></MiniTop>样式</MiniButton>
                <MiniButton><MiniTop><BucketIcon line /><svg width="6" height="3"><path d="M0 0h6L3 3z" fill={grey} /></svg></MiniTop>填充</MiniButton>
                <MiniButton><MiniTop><OutlineIcon line /><svg width="6" height="3"><path d="M0 0h6L3 3z" fill={grey} /></svg></MiniTop>边框</MiniButton>
            </MiniBar>

            <Watermark width="260" height="130" viewBox="1040 614 260 130" fill="#fff" fillOpacity=".8" stroke="#aaa" strokeOpacity=".4" strokeWidth="2" paintOrder="stroke">
                <g fontFamily="Liberation Sans, Noto Sans CJK SC, sans-serif">
                    <text x="1047" y="698" fontSize="54" fontWeight="700">Bai</text>
                    <ellipse cx="1141" cy="652" rx="9" ry="12" />
                    <ellipse cx="1158" cy="635" rx="9" ry="12" />
                    <ellipse cx="1180" cy="636" rx="9" ry="12" />
                    <ellipse cx="1193" cy="657" rx="9" ry="12" />
                    <path d="M1167 654c10 0 14 8 19 14 8 8 13 14 9 24-5 10-17 7-28 6-11 1-22 4-28-6-4-10 1-16 9-24 6-6 9-14 19-14z" />
                    <text x="1167" y="692" fontSize="34" fontWeight="700" textAnchor="middle" fill="#d8d8d8">du</text>
                    <text x="1206" y="694" fontSize="41" fontWeight="700">经验</text>
                    <text x="1050" y="730" fontSize="30" strokeWidth="1">jingyan.baidu.com</text>
                </g>
            </Watermark>
        </Screen>
    );
};

export default App;
